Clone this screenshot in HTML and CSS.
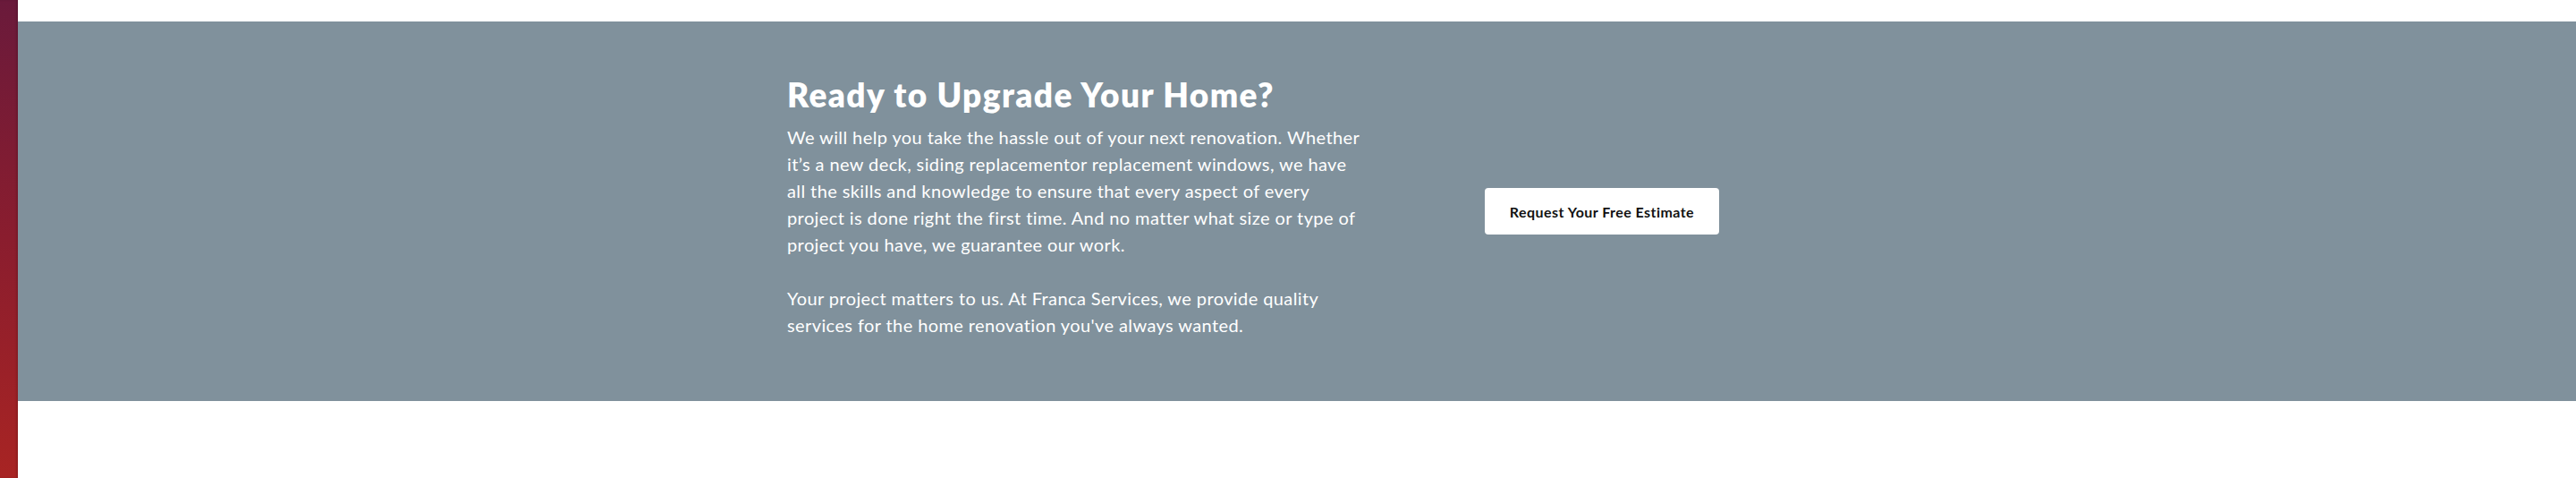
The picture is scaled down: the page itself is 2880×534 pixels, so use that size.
FILE: index.html
```html
<!DOCTYPE html>
<html lang="en">
<head>
<meta charset="utf-8">
<title>Ready to Upgrade Your Home?</title>
<link rel="stylesheet" href="styles.css">
</head>
<body>
<div class="page">
  <div class="edge-bar"></div>
  <main class="main">
    <section class="cta">
      <div class="container">
        <div class="cta-text">
          <h2 class="cta-title">Ready to Upgrade Your Home?</h2>
          <p class="cta-copy">We will help you take the hassle out of your next renovation. Whether it’s a new deck, siding replacementor replacement windows, we have all the skills and knowledge to ensure that every aspect of every project is done right the first time. And no matter what size or type of project you have, we guarantee our work.</p>
          <p class="cta-copy">Your project matters to us. At Franca Services, we provide quality services for the home renovation you've always wanted.</p>
        </div>
        <div class="cta-action">
          <a class="cta-button" href="#">Request Your Free Estimate</a>
        </div>
      </div>
    </section>
  </main>
</div>
</body>
</html>
```
FILE: styles.css
```css
* { box-sizing: border-box; }
html, body { margin: 0; padding: 0; background: #ffffff; }
body {
  font-family: "Lato", "Open Sans", sans-serif;
  color: #ffffff;
}
.page {
  display: flex;
  min-height: 534px;
}
.edge-bar {
  width: 20px;
  flex: 0 0 20px;
  background: linear-gradient(to bottom, #6a1a3b 0%, #8a1d2e 50%, #a82423 100%);
  box-shadow: inset -2px 0 2px rgba(0,0,0,0.12);
}
.main {
  flex: 1;
  padding-top: 24px;
}
.cta {
  background: #80919c;
  height: 424px;
  display: flex;
}
.container {
  width: 1140px;
  margin: 0 auto;
  display: grid;
  grid-template-columns: 682px 1fr;
}
.cta-text {
  align-self: start;
  padding-top: 60px;
}
.cta-title {
  margin: 0 0 11px;
  font-size: 37px;
  line-height: 43px;
  font-weight: 800;
  letter-spacing: 1.4px;
}
.cta-copy {
  margin: 0 0 30px;
  font-size: 20px;
  line-height: 30px;
  font-weight: 400;
  max-width: 648px;
  letter-spacing: 0.4px;
}
.cta-copy:last-child { margin-bottom: 0; }
.cta-action {
  align-self: center;
  display: flex;
  justify-content: center;
}
.cta-button {
  display: inline-flex;
  align-items: center;
  justify-content: center;
  width: 262px;
  height: 52px;
  background: #ffffff;
  color: #111111;
  border-radius: 4px;
  font-size: 16px;
  font-weight: 700;
  letter-spacing: 0.45px;
  text-decoration: none;
}
```
